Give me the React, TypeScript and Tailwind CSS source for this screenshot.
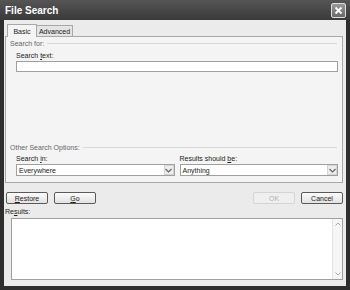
import React from 'react';

const font = 'font-["Liberation_Sans",Arial,sans-serif]';

const Chevron = () => (
  <svg width="7" height="5" viewBox="0 0 7 5">
    <path d="M0.5 1 L3.5 4 L6.5 1" fill="none" stroke="#666" strokeWidth="1.2" />
  </svg>
);

const Select: React.FC<{ value: string }> = ({ value }) => (
  <div className="flex h-[12px] items-center border border-[#a0a0a0] bg-white">
    <span className="flex-1 pl-[2px] text-[7px] leading-none text-[#222]">{value}</span>
    <div className="flex h-[10px] w-[10px] items-center justify-center border border-[#d4d4d4] bg-[#ededed]">
      <Chevron />
    </div>
  </div>
);

const Btn: React.FC<{ label: React.ReactNode; disabled?: boolean }> = ({ label, disabled }) => (
  <div
    className={`flex h-[12px] w-[42px] items-center justify-center rounded-[2px] text-[7px] leading-none ${
      disabled
        ? 'border border-[#d4d4d4] bg-[#efefef] text-[#b0b0b0]'
        : 'border border-[#5a5a5a] bg-gradient-to-b from-[#fbfbfb] to-[#e2e2e2] text-[#222]'
    }`}
  >
    {label}
  </div>
);

const GroupLabel: React.FC<{ text: string }> = ({ text }) => (
  <div className="flex items-center gap-[3px] pl-[4px] pr-[5px]">
    <span className="text-[7px] leading-none text-[#666]">{text}</span>
    <div className="h-px flex-1 bg-[#d8d8d8]" />
  </div>
);

export default function App() {
  return (
    <div className={`flex h-[290px] w-[350px] flex-col bg-[#2e2e2e] ${font}`}>
      {/* Title bar */}
      <div className="flex h-[20px] items-center justify-between bg-gradient-to-b from-[#555] to-[#3a3a3a] pl-[5px] pr-[4px]">
        <span className="text-[10px] font-bold text-white">File Search</span>
        <div className="flex h-[15px] w-[15px] items-center justify-center rounded-[2px] border border-[#dcdcdc] bg-gradient-to-b from-[#9a9a9a] to-[#6a6a6a]">
          <svg width="9" height="9" viewBox="0 0 9 9">
            <path d="M1.5 1.5 L7.5 7.5 M7.5 1.5 L1.5 7.5" stroke="white" strokeWidth="1.8" />
          </svg>
        </div>
      </div>

      {/* Body */}
      <div className="mx-[4px] mb-[4px] flex flex-1 flex-col bg-[#ebebeb] px-[1px] pt-[4px]">
        {/* Tabs */}
        <div className="flex h-[12px] items-end pl-[2px]">
          <div className="z-10 -mb-px flex h-[13px] w-[30px] items-center justify-center border border-b-0 border-[#a8a8a8] bg-[#f4f4f4] text-[7px] leading-none text-[#222]">
            Basic
          </div>
          <div className="flex h-[11px] w-[36px] items-center justify-center border border-l-0 border-b-0 border-[#a8a8a8] bg-[#e4e4e4] text-[7px] leading-none text-[#222]">
            Advanced
          </div>
        </div>

        {/* Tab panel */}
        <div className="mr-[2px] flex h-[147px] flex-col border border-[#a8a8a8] bg-[#f4f4f4] pt-[3px]">
          <GroupLabel text="Search for:" />
          <div className="mt-[5px] pl-[10px] pr-[4px]">
            <div className="text-[7px] leading-none text-[#222]">
              Search <u>t</u>ext:
            </div>
            <div className="mt-[2px] h-[11px] border border-[#a0a0a0] bg-white" />
          </div>
          <div className="flex-1" />
          <GroupLabel text="Other Search Options:" />
          <div className="mb-[6px] mt-[4px] flex gap-[5px] pl-[10px] pr-[4px]">
            <div className="flex-1">
              <div className="text-[7px] leading-none text-[#222]">
                Search <u>i</u>n:
              </div>
              <div className="mt-[2px]">
                <Select value="Everywhere" />
              </div>
            </div>
            <div className="flex-1">
              <div className="text-[7px] leading-none text-[#222]">
                Results should <u>b</u>e:
              </div>
              <div className="mt-[2px]">
                <Select value="Anything" />
              </div>
            </div>
          </div>
        </div>

        {/* Buttons */}
        <div className="mt-[9px] flex items-center pl-[1px] pr-[2px]">
          <div className="flex gap-[6px]">
            <Btn label={<><u>R</u>estore</>} />
            <Btn label={<><u>G</u>o</>} />
          </div>
          <div className="flex-1" />
          <div className="flex gap-[6px]">
            <Btn label="OK" disabled />
            <Btn label="Cancel" />
          </div>
        </div>

        {/* Results */}
        <div className="mt-[4px] text-[7px] leading-none text-[#222]">
          Re<u>s</u>ults:
        </div>
        <div className="mb-[6px] ml-[6px] mr-[2px] mt-[3px] flex flex-1 border border-[#a0a0a0] bg-white">
          <div className="flex-1" />
          <div className="flex w-[10px] flex-col justify-between border-l border-[#e4e4e4] bg-[#f6f6f6]">
            <div className="flex h-[10px] items-center justify-center">
              <svg width="6" height="4" viewBox="0 0 6 4">
                <path d="M0.5 3.5 L3 1 L5.5 3.5" fill="none" stroke="#aaa" strokeWidth="1" />
              </svg>
            </div>
            <div className="flex h-[10px] items-center justify-center">
              <svg width="6" height="4" viewBox="0 0 6 4">
                <path d="M0.5 0.5 L3 3 L5.5 0.5" fill="none" stroke="#aaa" strokeWidth="1" />
              </svg>
            </div>
          </div>
        </div>
      </div>
    </div>
  );
}
